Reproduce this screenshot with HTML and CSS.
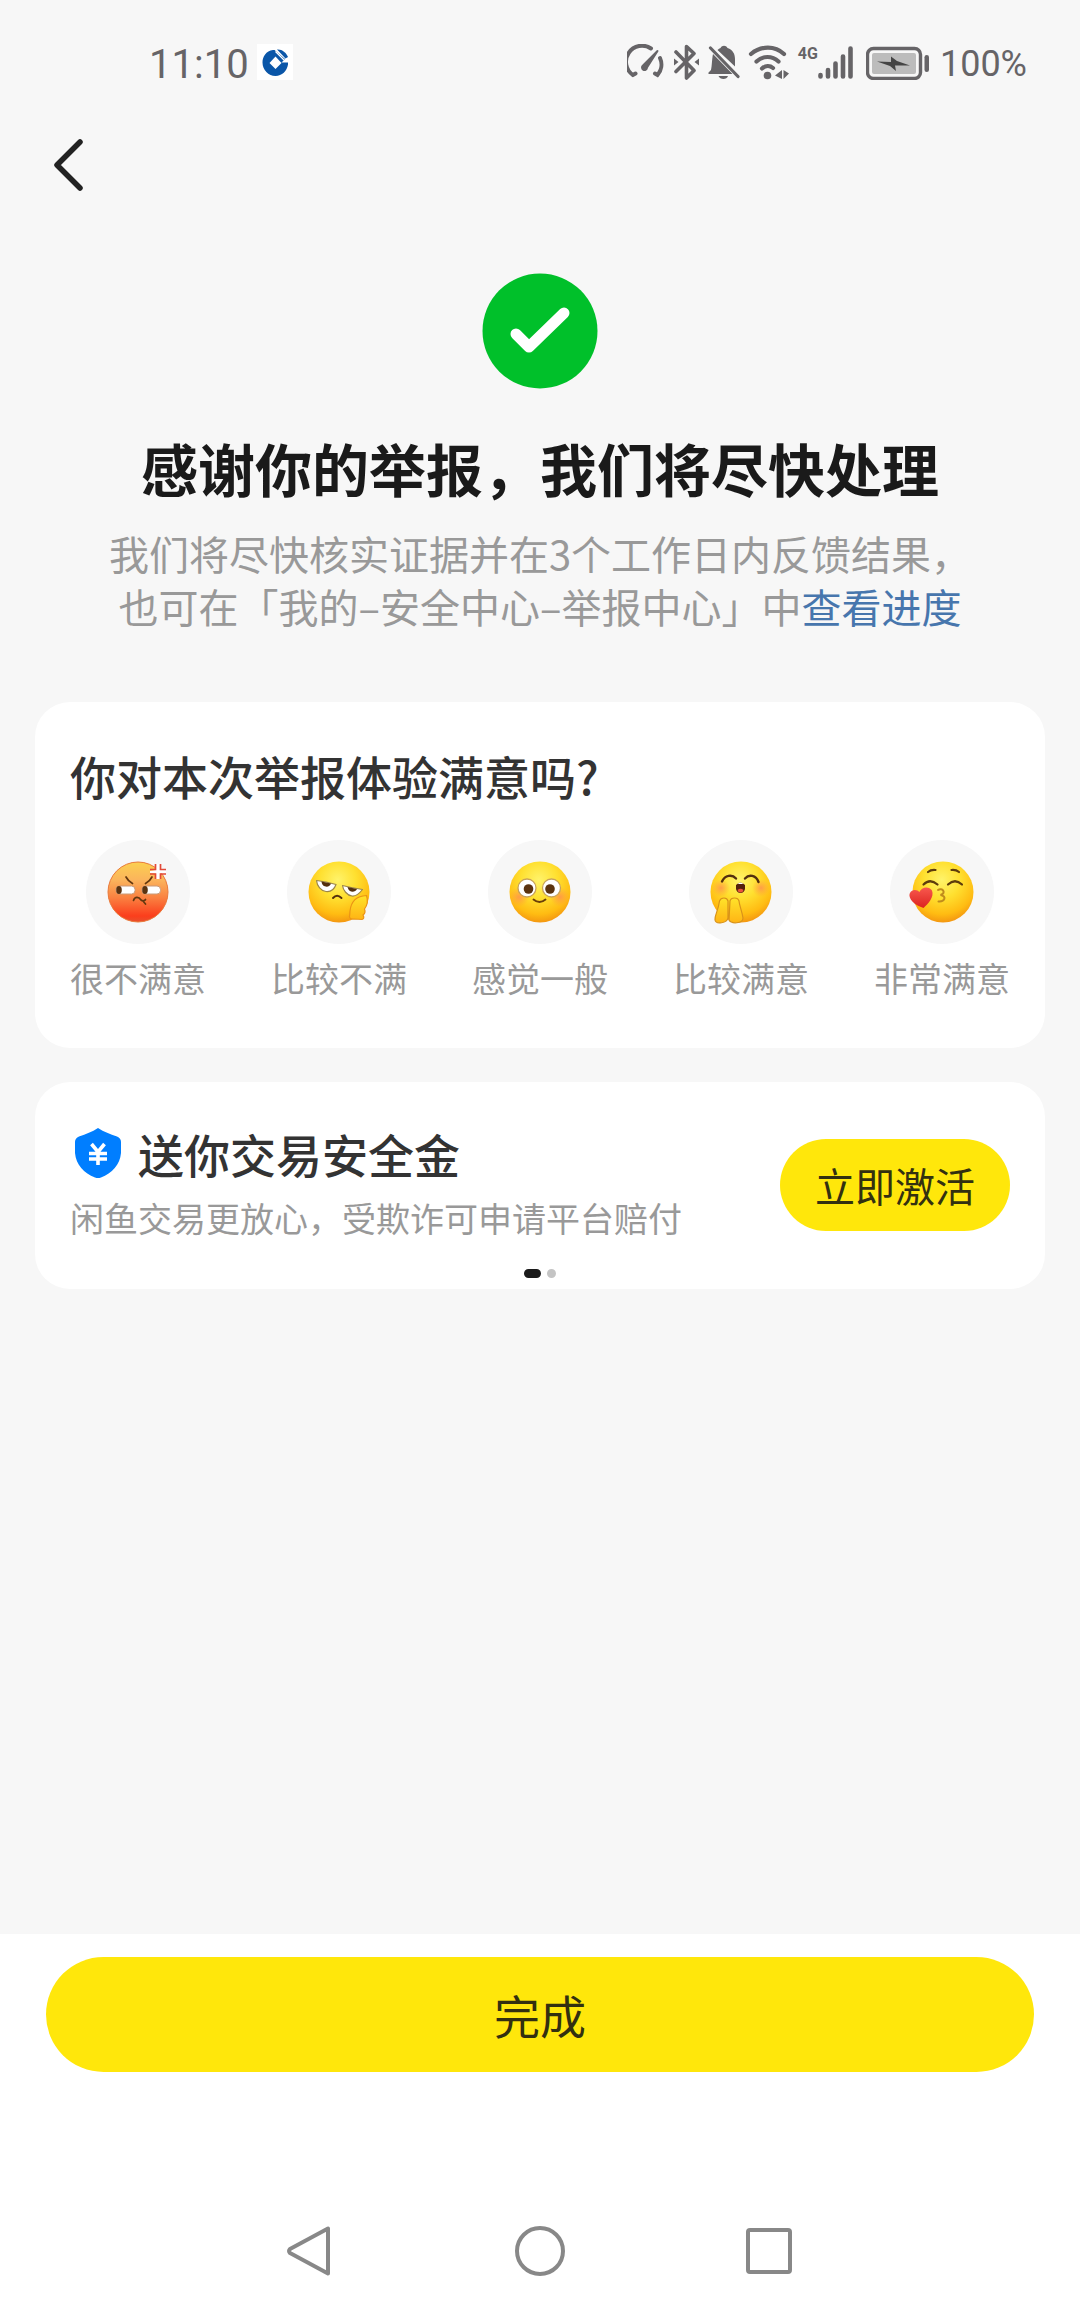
FILE: index.html
```html
<!DOCTYPE html>
<html lang="zh-CN">
<head>
<meta charset="utf-8">
<meta name="viewport" content="width=device-width, initial-scale=1">
<title>举报成功</title>
<link rel="stylesheet" href="styles.css">
</head>
<body>
<header class="status">
  <div class="status-left">
    <span class="time">11:10</span>
    <svg class="bank" width="36" height="36" viewBox="0 0 36 36" aria-hidden="true">
      <rect width="36" height="36" fill="#fff"/>
      <path fill="#0a56a8" fill-rule="evenodd" d="M16 6C9 7 5.500 12.500 5.500 18.500C5.500 26 11.500 32 18.500 32C25 32 30 27 31 20.500V18.500H24.500L28 15L17.500 6ZM18.500 12.500L24.500 19L18.500 25L12.500 19Z"/>
      <path fill="#0a56a8" d="M20 5.500C25 5 29 8.500 31 13L28.500 14.500Z"/>
      <path d="M18.500 7.500L27 16" stroke="#fff" stroke-width="1.200"/>
    </svg>
  </div>
  <div class="status-right">
    <svg width="38" height="36" viewBox="0 0 38 36" fill="none" stroke="#666467" stroke-width="4" stroke-linecap="round" aria-hidden="true">
      <path d="M24 4.500A16 16 0 0 0 6 31L8.500 29.500M33 14A16 16 0 0 1 30.500 31L28 29.500"/>
      <path d="M30.500 7L16 21.500A2.500 2.500 0 1 0 20 23.500Z" fill="#666467" stroke-width="2" stroke-linejoin="round"/>
    </svg>
    <svg width="27" height="36" viewBox="0 0 27 36" fill="none" stroke="#666467" stroke-width="3.600" stroke-linecap="round" stroke-linejoin="round" aria-hidden="true">
      <path d="M3 8L21 26.500L13.500 34V2.500L21 9.500L3 27.500"/>
      <path d="M1 14.500L5.500 18L1 21.500ZM26 14.500L21.500 18L26 21.500Z" fill="#666467" stroke="none"/>
    </svg>
    <svg width="32" height="36" viewBox="0 0 32 36" fill="#666467" aria-hidden="true">
      <path d="M5 10L24.500 30H0.500V28.500L3 26C4 22 4 14 5 10ZM9.500 6C10.500 5 11.500 4.500 12.500 4C14 1 18 1 19.500 4C25 6 27 10 27 15V22.500ZM10.500 32H20C19 36 12 36 10.500 32Z"/>
      <path d="M2.500 4L30 32.500" stroke="#666467" stroke-width="3.200" stroke-linecap="round"/>
    </svg>
    <svg width="42" height="36" viewBox="0 0 42 36" fill="none" stroke="#666467" stroke-width="4.200" stroke-linecap="round" aria-hidden="true">
      <path d="M3 10C13 1.500 27 1.500 36 10M8.500 17.500C15 11.500 24 11.500 30.500 17.500M14 24.500C17.500 21.500 22 21.500 25 24"/>
      <circle cx="19.500" cy="31.500" r="3.800" fill="#666467" stroke="none"/>
      <path d="M34 26V35L27 31.500ZM35.500 26L41 29.500L35.500 35Z" fill="#666467" stroke="none"/>
    </svg>
    <div class="cell">
      <span class="net">4G</span>
      <svg width="37" height="36" viewBox="0 0 37 36" stroke="#666467" stroke-width="4.600" stroke-linecap="round" aria-hidden="true">
        <path d="M2.500 31V32.500M10 26V32.500M17.500 19.500V32.500M25 12.500V32.500M32.500 4.500V32.500"/>
      </svg>
    </div>
    <div class="power">
      <svg width="64" height="36" viewBox="0 0 64 36" aria-hidden="true">
        <rect x="1.500" y="4.500" width="53" height="30" rx="6" fill="none" stroke="#666467" stroke-width="3.400"/>
        <rect x="6" y="9" width="44" height="21" rx="2" fill="#bcbcbc"/>
        <path d="M25 12.500L31 17L44 21.500L29 21.500L30 27L24 22L11 17.500L25 18Z" fill="#444"/>
        <rect x="58.500" y="11" width="4.500" height="17" rx="2.200" fill="#666467"/>
      </svg>
      <span class="percent">100%</span>
    </div>
  </div>
</header>

<nav class="topbar">
  <button class="back" type="button" aria-label="返回">
    <svg width="34" height="58" viewBox="0 0 34 58" fill="none" stroke="#222" stroke-width="5.500" stroke-linecap="round" stroke-linejoin="round" aria-hidden="true"><path d="M29 6L6 29L29 52"/></svg>
  </button>
</nav>

<main class="content">
  <section class="result">
    <svg width="116" height="116" viewBox="0 0 116 116" aria-hidden="true">
      <circle cx="58" cy="58" r="57.500" fill="#00c02a"/>
      <path d="M34 61L47 74L82 40" fill="none" stroke="#fff" stroke-width="11" stroke-linecap="round" stroke-linejoin="round"/>
    </svg>
    <h1>感谢你的举报，我们将尽快处理</h1>
    <p>我们将尽快核实证据并在3个工作日内反馈结果，<br>也可在「我的–安全中心–举报中心」中<a href="#progress">查看进度</a></p>
  </section>

  <section class="card survey">
    <h2>你对本次举报体验满意吗?</h2>
    <div class="rates">
      <button class="rate" type="button">
        <svg class="face" viewBox="0 0 104 104" aria-hidden="true">
          <defs>
            <linearGradient id="angry" x1="0" y1="0" x2="0" y2="1"><stop offset="0" stop-color="#fbd050"/><stop offset=".3" stop-color="#fbb45c"/><stop offset=".6" stop-color="#fa8040"/><stop offset=".9" stop-color="#fb3e1c"/><stop offset="1" stop-color="#e8502c"/></linearGradient>
            <radialGradient id="yellow" cx=".48" cy=".3" r=".75"><stop offset="0" stop-color="#fff36a"/><stop offset=".4" stop-color="#ffe030"/><stop offset=".75" stop-color="#ffbc12"/><stop offset="1" stop-color="#f08a10"/></radialGradient>
            <radialGradient id="blush"><stop offset="0" stop-color="#ff8f50" stop-opacity=".8"/><stop offset="1" stop-color="#ff9f40" stop-opacity="0"/></radialGradient>
            <linearGradient id="hand" x1="0" y1="0" x2="0" y2="1"><stop offset="0" stop-color="#ffe32a"/><stop offset="1" stop-color="#ffb414"/></linearGradient>
            <linearGradient id="heart" x1="0" y1="0" x2="0" y2="1"><stop offset="0" stop-color="#f8584e"/><stop offset="1" stop-color="#dc2420"/></linearGradient>
          </defs>
          <circle cx="52" cy="52" r="30" fill="url(#angry)" stroke="#e8793a" stroke-width="1"/>
          <g fill="#fff" stroke="#c99a78" stroke-width="1"><rect x="30" y="46" width="19" height="8" rx="3.500"/><rect x="56" y="46" width="18.500" height="8" rx="3.500"/></g>
          <ellipse cx="33" cy="50" rx="2.800" ry="3.900" fill="#5b3310"/><ellipse cx="59" cy="50" rx="2.800" ry="3.900" fill="#5b3310"/>
          <path d="M40 37Q42 41 46.500 43.500M66 37Q64 41 59.500 43.500M47.500 60.500C49 56 53 57 55 60C57 61.500 59 60.500 59.500 59.500M57 61L59.500 64" fill="none" stroke="#64380f" stroke-width="1.700" stroke-linecap="round"/>
          <path d="M69.500 24L70 30L64 31L64 33L70 33.500L70 39L74 39L74 33.500L80 33L80 31L74 30L74.500 24Z" fill="#fff"/>
          <path d="M69.500 24V29.500H64M74.500 24V29.500H80M69.500 39V34H64M74.500 39V34H80" fill="none" stroke="#e24a38" stroke-width="1.700"/>
        </svg>
        <span>很不满意</span>
      </button>
      <button class="rate" type="button">
        <svg class="face" viewBox="0 0 104 104" aria-hidden="true">
          <circle cx="52" cy="52" r="30.500" fill="url(#yellow)"/>
          <path d="M29.500 40.500Q39 41.500 49 44.500C47 50 43 52 39 51.500C34 51 30 46 29.500 40.500ZM55.500 45.500Q65 48 75.500 49.500C72 54 69 56.500 65 56C60 55.500 56 50 55.500 45.500Z" fill="#fff" stroke="#9c8648" stroke-width="1.200" stroke-linejoin="round"/>
          <path d="M34.500 41.500L44 43.500C43 48 35 48 34.500 41.500ZM60.500 47L70 49C68 53 62 53 60.500 47Z" fill="#54300e"/>
          <path d="M46 58Q50 53.500 54.500 58" fill="none" stroke="#54300e" stroke-width="1.900" stroke-linecap="round"/>
          <path d="M79.500 55.500C69 56 64 62 63 71L62.500 77Q63 79.500 67 79L75 79.500Q78 78.500 76 75Q79 73 77.500 69Q82 63 79.500 55.500Z" fill="url(#hand)" stroke="#eb9416" stroke-width="1.200"/>
        </svg>
        <span>比较不满</span>
      </button>
      <button class="rate" type="button">
        <svg class="face" viewBox="0 0 104 104" aria-hidden="true">
          <circle cx="52" cy="52" r="30.500" fill="url(#yellow)"/>
          <circle cx="31" cy="57" r="10" fill="url(#blush)"/><circle cx="72" cy="57" r="10" fill="url(#blush)"/>
          <circle cx="39" cy="48" r="9" fill="#fff" stroke="#c9a25a" stroke-width="1.300"/><circle cx="63.500" cy="48" r="9" fill="#fff" stroke="#c9a25a" stroke-width="1.300"/>
          <circle cx="40.500" cy="49" r="4.800" fill="#5b3310"/><circle cx="62" cy="49" r="4.800" fill="#5b3310"/>
          <path d="M45.500 59.500Q51.500 64.500 57.500 59.500" fill="none" stroke="#6b3f08" stroke-width="1.900" stroke-linecap="round"/>
        </svg>
        <span>感觉一般</span>
      </button>
      <button class="rate" type="button">
        <svg class="face" viewBox="0 0 104 104" aria-hidden="true">
          <circle cx="52" cy="52" r="30.500" fill="url(#yellow)"/>
          <circle cx="32" cy="48" r="9" fill="url(#blush)"/><circle cx="72" cy="48" r="9" fill="url(#blush)"/>
          <path d="M33 41.500C36 35 43 34 47 38.500M56 38.500C60 34 67 35 69.500 42" fill="none" stroke="#54300e" stroke-width="2.400" stroke-linecap="round"/>
          <path d="M47 45Q51.500 40 56 45V49Q55 53 51.500 53Q48 53 47 49Z" fill="#54200c"/><path d="M48.500 50Q51.500 47.500 54.500 50Q54 52.500 51.500 52.500Q49 52.500 48.500 50Z" fill="#e8553c"/><path d="M48.500 44Q51.500 41 54.500 44Z" fill="#fff"/>
          <path d="M30.500 61C32 57 38 57 39 61L39 78C38 83 27 85 26 80C25.500 75 29 72 30.500 61ZM41 61C42 57 49 57 50 61C50.500 66 53 71 54 78C54 84 42 84 40 80Z" fill="url(#hand)" stroke="#d8921a" stroke-width="1.200"/>
        </svg>
        <span>比较满意</span>
      </button>
      <button class="rate" type="button">
        <svg class="face" viewBox="0 0 104 104" aria-hidden="true">
          <circle cx="53" cy="52" r="30.500" fill="url(#yellow)"/>
          <path d="M38 32Q41 29.500 45.500 30M61.500 30Q66 29.500 69 32M33.500 44.500Q40 38 47.500 44.500M58 44.500Q65 38 72 44.500" fill="none" stroke="#5e3c0c" stroke-width="2.200" stroke-linecap="round"/>
          <path d="M48 50C52 47 57 53 50.500 55C57 56 55 62 48.500 61.500" fill="none" stroke="#c08c1c" stroke-width="2" stroke-linecap="round"/>
          <path d="M33.500 68C27 66 20 61 19.500 56C19 50 26 48 29.500 52C31 47 39 45.500 42 50.500C44.500 57 38 64 33.500 68Z" fill="url(#heart)"/>
        </svg>
        <span>非常满意</span>
      </button>
    </div>
  </section>

  <section class="card promo">
    <div class="promo-row">
      <div class="promo-text">
        <h2>
          <svg width="56" height="52" viewBox="0 0 56 52" aria-hidden="true">
            <path d="M28 1C34 5 40 7 47 9.500Q51 11 51 15V26C50 38 42 46 31 50.500Q28 51.500 25 50.500C14 46 6 38 5 26V15Q5 11 9 9.500C16 7 22 5 28 1Z" fill="#007eff"/>
            <path d="M21.500 17L28 25L34.500 17M19 26.500H37M19 32H37M28 25V38" fill="none" stroke="#fff" stroke-width="3.600"/>
          </svg>
          送你交易安全金
        </h2>
        <p>闲鱼交易更放心，受欺诈可申请平台赔付</p>
      </div>
      <button class="activate" type="button">立即激活</button>
    </div>
    <div class="dots" aria-hidden="true"><i class="dot on"></i><i class="dot"></i></div>
  </section>
</main>

<footer class="footer">
  <button class="done" type="button">完成</button>
  <nav class="sysnav">
    <button type="button" aria-label="返回"><svg width="52" height="52" viewBox="0 0 52 52"><path d="M43 3.500V48.500L5 28Q3 26 5 24Z"/></svg></button>
    <button type="button" aria-label="主屏幕"><svg width="52" height="52" viewBox="0 0 52 52"><circle cx="26" cy="26" r="23"/></svg></button>
    <button type="button" aria-label="最近任务"><svg width="52" height="52" viewBox="0 0 52 52"><rect x="5" y="5" width="42" height="42" rx="2"/></svg></button>
  </nav>
</footer>
</body>
</html>
```

FILE: styles.css
```css
* {
  box-sizing: border-box;
}

body {
  margin: 0;
  min-height: 100vh;
  display: flex;
  flex-direction: column;
  background: #f7f7f7;
  color: #333;
  font-family: "Noto Sans CJK SC", sans-serif;
}

h1, h2, p {
  margin: 0;
}

button {
  margin: 0;
  padding: 0;
  border: 0;
  background: none;
  color: inherit;
  font: inherit;
}

svg {
  display: block;
  flex: none;
}

.status {
  display: flex;
  justify-content: space-between;
  height: 124px;
  padding: 0 53px 0 149px;
  color: #666467;
  font-family: Roboto, sans-serif;
}

.status-left,
.status-right,
.power {
  display: flex;
  align-items: center;
}

.status-left {
  gap: 8px;
}

.status-right {
  gap: 8px;
}

.power {
  gap: 10px;
  margin-left: 3px;
}

.time {
  padding-top: 4px;
  font-size: 40px;
}

.percent {
  padding-top: 4px;
  font-size: 36px;
}

.cell {
  display: flex;
  align-items: flex-start;
}

.net {
  font-size: 16px;
  line-height: 20px;
  font-weight: 700;
}

.topbar {
  display: flex;
  height: 82px;
  padding-left: 51px;
}

.back {
  display: flex;
  align-items: center;
}

.content {
  flex: 1;
  display: flex;
  flex-direction: column;
  padding: 67px 35px 0;
}

.result {
  display: flex;
  flex-direction: column;
  align-items: center;
  text-align: center;
  padding-bottom: 69px;
}

.result h1 {
  margin-top: 38px;
  font-size: 57px;
  line-height: 80px;
  font-weight: 700;
  color: #1a1a1a;
}

.result p {
  margin-top: 20px;
  font-size: 40px;
  line-height: 53px;
  color: #999;
}

.result a {
  color: #4776ad;
  text-decoration: none;
}

.card {
  background: #fff;
  border-radius: 35px;
  padding: 0 35px;
}

.card h2 {
  font-size: 46px;
  line-height: 60px;
  font-weight: 500;
}

.survey {
  margin-bottom: 34px;
  padding-top: 43px;
  padding-bottom: 46px;
}

.rates {
  display: flex;
  justify-content: space-between;
  margin-top: 35px;
}

.rate {
  display: flex;
  flex-direction: column;
  align-items: center;
  gap: 10px;
  font-size: 34px;
  line-height: 48px;
  color: #999;
}

.face {
  width: 104px;
  height: 104px;
  border-radius: 50%;
  background: #f7f7f7;
}

.promo {
  padding-top: 41px;
}

.promo-row {
  display: flex;
  align-items: center;
  justify-content: space-between;
}

.promo h2 {
  display: flex;
  align-items: center;
  gap: 12px;
}

.promo p {
  margin-top: 11px;
  font-size: 34px;
  line-height: 48px;
  color: #999;
}

.activate {
  margin-top: 4px;
  padding: 0 35px;
  border-radius: 46px;
  background: #ffe70b;
  color: #333010;
  font-size: 40px;
  line-height: 92px;
}

.dots {
  display: flex;
  justify-content: center;
  gap: 6px;
  padding: 27px 0 11px;
}

.dot {
  width: 9px;
  height: 9px;
  border-radius: 5px;
  background: #c4c4c4;
}

.dot.on {
  width: 17px;
  background: #1a1a1a;
}

.footer {
  background: #fff;
  padding: 23px 46px 33px;
}

.done {
  display: block;
  width: 100%;
  border-radius: 58px;
  background: #ffe70b;
  color: #333010;
  font-size: 46px;
  line-height: 115px;
}

.sysnav {
  display: flex;
  justify-content: center;
  gap: 177px;
  margin-top: 153px;
}

.sysnav svg {
  fill: none;
  stroke: #888;
  stroke-width: 4;
  stroke-linejoin: round;
}
```
